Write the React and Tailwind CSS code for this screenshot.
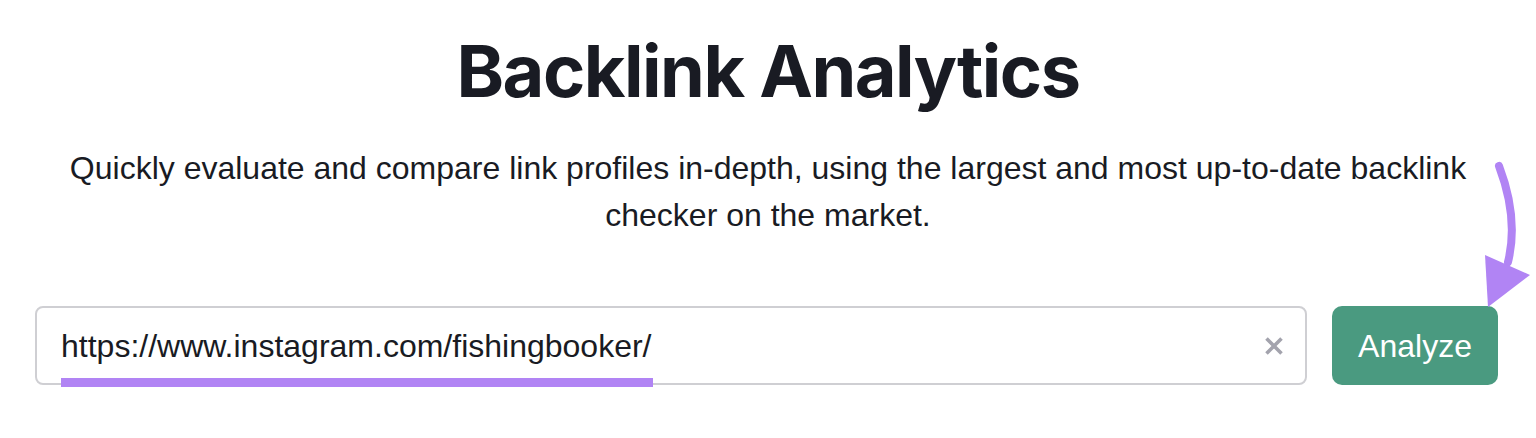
import React from "react";

export default function App() {
  return (
    <div className="relative w-[1536px] h-[438px] bg-white overflow-hidden">
      <div className="flex flex-col items-center pt-[28px]">
        <h1 className="text-[72px] leading-[86px] font-bold tracking-[-1.5px] text-[#191b23] font-['Inter',sans-serif]">
          Backlink Analytics
        </h1>
        <p className="mt-[31px] w-[1420px] text-center text-[32px] leading-[47px] text-[#191b23] font-['Liberation_Sans',Arial,sans-serif]">
          Quickly evaluate and compare link profiles in-depth, using the largest and most up-to-date backlink checker on the market.
        </p>
      </div>
      <div className="flex items-center gap-[25px] pl-[35px] pr-[38px] mt-[67px]">
        <div className="relative flex-1 h-[79px] rounded-[8px] border-2 border-[#cfcfd3] flex items-center pl-[24px] pr-[20px]">
          <span className="text-[32px] text-[#191b23] font-['Liberation_Sans',Arial,sans-serif]">
            https://www.instagram.com/fishingbooker/
          </span>
          <span className="absolute left-[24px] bottom-[-4px] w-[592px] h-[9px] bg-[#b184f4]" />
          <svg className="ml-auto" width="22" height="22" viewBox="0 0 22 22">
            <path d="M3.5 3.5 L18.5 18.5 M18.5 3.5 L3.5 18.5" stroke="#a3a3ad" strokeWidth="3.6" strokeLinecap="butt" />
          </svg>
        </div>
        <button className="w-[166px] h-[79px] rounded-[10px] bg-[#4a9a80] text-white text-[32px] font-['Liberation_Sans',Arial,sans-serif]">
          Analyze
        </button>
      </div>
      <svg className="absolute left-[1470px] top-[160px]" width="66" height="152" viewBox="0 0 66 152">
        <path d="M29 6 C40 35 46 70 38 102" fill="none" stroke="#b184f4" strokeWidth="8" strokeLinecap="round" />
        <polygon points="15,95 60,115 18,147" fill="#b184f4" />
      </svg>
    </div>
  );
}
